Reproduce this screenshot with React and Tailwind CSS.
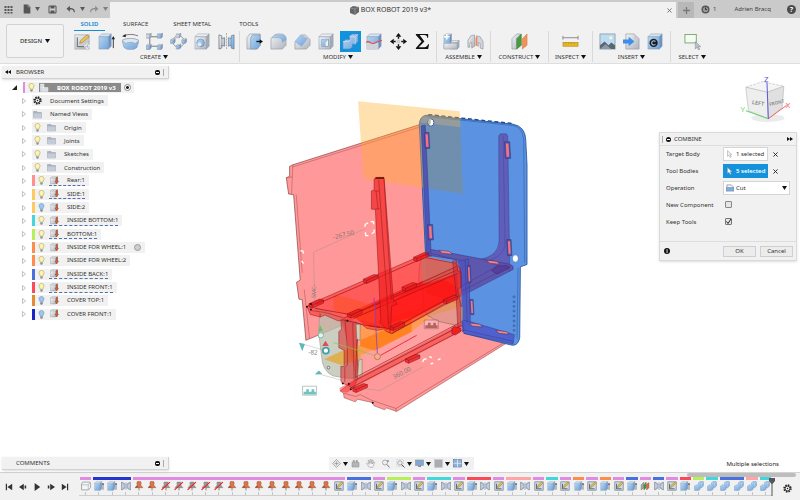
import React from "react";

const PINK = "#e28be2";
const BLUE = "#4a70e0";
const NAVY = "#2536cf";
const LIME = "#b8ee5a";
const CYAN = "#45d6dc";
const RED = "#fa4a58";
const SALMON = "#ffa5a5";
const ORANGE = "#ff8c4c";

function Caret({ className = "" }) {
  return (
    <svg viewBox="0 0 5 4" className={`h-1 w-[5px] shrink-0 ${className}`} aria-hidden="true">
      <path d="M0 0h5L2.500 4z" fill="#111" />
    </svg>
  );
}

/* Shared paint servers for every icon on the page */
function Paints() {
  return (
    <svg className="absolute h-0 w-0" aria-hidden="true">
      <defs>
        <linearGradient id="gb" x1="0" y1="0" x2="1" y2="1">
          <stop offset="0" stopColor="#b9d7f3" />
          <stop offset="1" stopColor="#6fa3db" />
        </linearGradient>
        <linearGradient id="gg" x1="0" y1="0" x2="1" y2="1">
          <stop offset="0" stopColor="#f2f3f5" />
          <stop offset="1" stopColor="#aeb4be" />
        </linearGradient>
      </defs>
    </svg>
  );
}

function Box({ x = 1, y = 1, w = 12, h = 12, d = 3, front = "url(#gb)", top = "#d5e4f4", side = "#6793c9", line = "#8495aa" }) {
  return (
    <g stroke={line} strokeWidth=".5" strokeLinejoin="round">
      <path d={`M${x} ${y + d}l${d} ${-d}h${w}l${-d} ${d}z`} fill={top} />
      <path d={`M${x + w} ${y + d}l${d} ${-d}v${h}l${-d} ${d}z`} fill={side} />
      <path d={`M${x} ${y + d}h${w}v${h}h${-w}z`} fill={front} />
    </g>
  );
}

const grey = { front: "url(#gg)", top: "#eceef1", side: "#a5abb5" };

const ART = {
  sketch: (
    <>
      <rect x="1" y="2" width="15" height="15" fill="url(#gg)" stroke="#9aa0a8" strokeWidth=".7" />
      <path d="M3.500 4.500v10h9" fill="none" stroke="#555d66" strokeWidth="1" />
      <path d="M6 11l1-3 7-6 2 2-7 6z" fill="#f4c64e" stroke="#917131" strokeWidth=".6" />
      <path d="M14 11v6M11 14h6" stroke="#fff" strokeWidth="2.400" />
      <path d="M14 11.500v5M11.500 14h5" stroke="#9aa4b5" strokeWidth=".8" />
    </>
  ),
  extrude: (
    <>
      <Box x={1} y={1} w={10} h={13} />
      <path d="M16.200 5v11" stroke="#333" strokeWidth="1" />
      <path d="M14.400 6.500L16.200 3.300 18 6.500z" fill="#222" />
    </>
  ),
  revolve: (
    <>
      <path d="M0 8c5-3 13-3 18 0l-2 7c-2 2-4 2.500-7 2.500S4 17 2 15z" fill="url(#gb)" stroke="#8aa0b8" strokeWidth=".6" />
      <path d="M0 8c5-3 13-3 18 0l-4 3c-3-1.500-7-1.500-10 0z" fill="#dfe5ec" stroke="#8aa0b8" strokeWidth=".6" />
      <path d="M2 3c4-2 10-2 15 0" fill="none" stroke="#555" strokeWidth=".8" />
      <path d="M4 1L0 3.500l4 1z" fill="#222" />
    </>
  ),
  pattern: (
    <>
      <path d="M4 4h10M4 4v10h10" stroke="#555" strokeWidth=".8" fill="none" />
      <Box x={0} y={0} w={4} h={4} d={1.5} {...grey} />
      <Box x={12} y={0} w={4} h={4} d={1.5} />
      <Box x={0} y={12} w={4} h={4} d={1.5} />
      <Box x={12} y={12} w={4} h={4} d={1.5} />
    </>
  ),
  circular: (
    <>
      <circle cx="9" cy="9" r="6" fill="none" stroke="#777" strokeWidth=".7" />
      <Box x={6.5} y={0} w={3.5} h={3.5} d={1.500} {...grey} />
      <Box x={0.500} y={6} w={3.5} h={3.5} d={1.500} />
      <Box x={12.500} y={6} w={3.5} h={3.5} d={1.500} />
      <Box x={6.500} y={12} w={3.5} h={3.5} d={1.500} />
    </>
  ),
  hole: (
    <>
      <Box x={1} y={1} w={12} h={13} {...grey} />
      <circle cx="7" cy="10.500" r="4" fill="url(#gb)" stroke="#7b8ba0" strokeWidth=".7" />
      <circle cx="5.800" cy="12" r="2.200" fill="#dfeaf5" />
    </>
  ),
  mirror: (
    <>
      <path d="M1 2l3 1v3l3-1v9l-3-1v3l-3 1z" fill="url(#gg)" stroke="#6f7680" strokeWidth=".8" />
      <path d="M17 2l-3 1v3l-3-1v9l3-1v3l3 1z" fill="url(#gb)" stroke="#6f8199" strokeWidth=".8" />
      <path d="M4 5v9M14 5v9" stroke="#7f8893" strokeWidth=".6" />
      <path d="M9 0v18" stroke="#777" strokeWidth=".6" strokeDasharray="2 1" />
    </>
  ),
  presspull: (
    <>
      <path d="M1 5l3-4h11v12l-4 4H1z" fill="url(#gg)" stroke="#8a919b" strokeWidth=".6" />
      <path d="M5 5l2-3h8v11l-3 4H5z" fill="url(#gb)" stroke="#7792b0" strokeWidth=".6" />
      <path d="M11 9h4" stroke="#111" strokeWidth="1.400" />
      <path d="M14.500 6.500L18 9l-3.500 2.500z" fill="#111" />
    </>
  ),
  fillet: (
    <>
      <path d="M1 6l4-4c2-1 4-1 6-1 4 0 6 2 6 5v7l-4 4H1z" fill="url(#gg)" stroke="#8a919b" strokeWidth=".6" />
      <path d="M5 2h6c4 0 6 2 6 5l-4 3c0-4-2-5-5-5H2z" fill="url(#gb)" stroke="#86a3c2" strokeWidth=".5" />
    </>
  ),
  chamfer: (
    <>
      <path d="M1 10l7-8h4l5 5v6l-4 4H1z" fill="url(#gg)" stroke="#8a919b" strokeWidth=".6" />
      <path d="M1 9l6-7 7 4-6 8z" fill="url(#gb)" stroke="#86a3c2" strokeWidth=".5" />
    </>
  ),
  shell: (
    <>
      <Box x={1} y={1} w={12} h={13} {...grey} />
      <rect x="4" y="7" width="7" height="7" fill="#e9f1f9" stroke="#76808d" strokeWidth=".6" />
      <path d="M4 7h7l-3 3v4H4z" fill="url(#gb)" />
    </>
  ),
  combine: (
    <g stroke="#587fae" strokeWidth=".6" strokeLinejoin="round">
      <path d="M1 9l3-2h4V3l3-2h6v8l-3 3h-3v3l-3 2H1z" fill="url(#gb)" />
      <path d="M1 9h6l2-2M8 4h6l3-3M14 4v8" fill="none" stroke="#dceafa" />
    </g>
  ),
  split: (
    <>
      <Box x={1} y={1} w={12} h={13} />
      <path d="M1 10h12v7H1z" fill="#cfd4db" />
      <path d="M0 10c3-3 5 2 8 1s6-3 9-3" fill="none" stroke="#e34848" strokeWidth="1.200" />
    </>
  ),
  move: (
    <g fill="#111">
      <path d="M9 0l3 4H6zM9 18l3-4H6zM0 9l4-3v6zM18 9l-4-3v6z" />
      <path d="M9 4v2M9 12v2M4 9h2M12 9h2" stroke="#111" strokeWidth="1.500" />
      <path d="M7 7h4v4H7z" fill="#ccd0d5" />
    </g>
  ),
  sigma: <path d="M2 1h13v4h-1c0-2-1-3-3-3H6l5 7-6 6h6c2 0 3-1 4-3h1l-1 5H2v-1l6-7-6-7z" fill="#111" />,
  component: (
    <>
      <Box x={1} y={1} w={6} h={13} d={2} />
      <Box x={8} y={8} w={7} h={7} d={2} {...grey} />
      <path d="M1 11h14v6H1z" fill="url(#gg)" stroke="#8a919b" strokeWidth=".5" />
      <path d="M4 1v6M1 4h6" stroke="#fff" strokeWidth="1.600" />
    </>
  ),
  joint: (
    <>
      <path d="M1 15V8l3-5 4-1v12l-3 2v-6l-2 1v4z" fill="url(#gg)" stroke="#8d949e" strokeWidth=".7" />
      <path d="M10 3l4 1 3 5v8l-3-1v-5l-2-1v4l-2-1z" fill="#d3d6dc" stroke="#8d949e" strokeWidth=".7" />
      <path d="M9 5l2-1v9l-2 1z" fill="#f08a58" />
    </>
  ),
  plane: (
    <>
      <path d="M1 6l5-5h4v12l-4 4H1z" fill="url(#gg)" stroke="#8a919b" strokeWidth=".6" />
      <path d="M6 6l5-5v12l-5 4z" fill="#4b9a3e" stroke="#38762f" strokeWidth=".5" />
      <path d="M12 6l5-5v12l-5 4z" fill="#f29257" stroke="#c8713d" strokeWidth=".5" />
    </>
  ),
  measure: (
    <>
      <path d="M1 5h16M1 3v4M17 3v4" stroke="#888" strokeWidth="1" />
      <rect x="1" y="10" width="16" height="4" fill="#e8b51c" stroke="#a6821b" strokeWidth=".6" />
      <path d="M4 10v1.500M7 10v1.500M10 10v1.500M13 10v1.500" stroke="#a6821b" strokeWidth=".6" />
    </>
  ),
  image: (
    <>
      <rect x="1" y="1" width="16" height="16" fill="#bcdcf1" stroke="#8796a6" strokeWidth=".8" />
      <circle cx="12.500" cy="5" r="1.600" fill="#fff8d8" />
      <path d="M1 13l5-4 4 4 3-3 4 3v4H1z" fill="#5c6672" />
      <path d="M1 17l6-5 6 5z" fill="#8d98a5" />
    </>
  ),
  insert: (
    <>
      <path d="M3 1h9l5 5v11H3z" fill="url(#gg)" stroke="#959ba4" strokeWidth=".7" />
      <path d="M12 1v5h5z" fill="#c5cad1" />
      <path d="M0 7h6V4l6 5-6 5v-3H0z" fill="#3d8eea" />
    </>
  ),
  store: (
    <>
      <Box x={1} y={1} w={12} h={13} />
      <circle cx="7" cy="10.500" r="4.400" fill="#1b1f24" />
      <path d="M9 9c-2-1.500-4-.5-4 1.500s2 3 4 1.500" fill="none" stroke="#a9cbee" strokeWidth="1.200" />
    </>
  ),
  select: (
    <>
      <rect x="1" y="1.500" width="12" height="9" fill="#f6faf4" stroke="#6aa35c" strokeWidth=".9" />
      <path d="M12 9v8l2-2 1.500 3 1.200-.7-1.500-2.800h2.600z" fill="#b9c0c8" stroke="#7e858d" strokeWidth=".5" />
    </>
  ),
  part: (
    <>
      <path d="M1 6c1-3 2-4 4-4h10c2 0 2 1 2 3v7l-4 4H1z" fill="#f4f5f7" stroke="#6b7078" strokeWidth="1" />
      <path d="M1 7h12v9M13 7l3-4" fill="none" stroke="#8a9099" strokeWidth=".9" />
    </>
  ),
  series: (
    <g fill="#c3cfde" stroke="#6c7785" strokeWidth="1">
      <path d="M1 2l3 1v2h3v8H4v2l-3 1z" />
      <path d="M17 2l-3 1v2h-3v8h3v2l3 1z" />
      <path d="M9 2v14" stroke="#5b86bd" />
    </g>
  ),
  pin: (
    <>
      <path d="M9 11v6" stroke="#555" strokeWidth="1.200" />
      <path d="M6 1h6l1 3-1 3 4 5H2l4-5-1-3z" fill="#dd7348" stroke="#94492c" strokeWidth=".8" />
      <path d="M2 12h6l-2-4z" fill="#93573f" />
    </>
  ),
  pinoff: (
    <>
      <path d="M9 11v6" stroke="#555" strokeWidth="1.200" />
      <path d="M6 2h6l1 2-1 3 4 5H2l4-5-1-3z" fill="#9b9b9b" stroke="#666" strokeWidth=".8" />
      <path d="M1 16L16 2" stroke="#f02020" strokeWidth="2.200" />
    </>
  ),
  tsketch: (
    <>
      <rect x="1.500" y="1.500" width="15" height="15" fill="#cbdcec" stroke="#6a7786" strokeWidth="1.200" />
      <path d="M4.500 5v9h9" fill="none" stroke="#38424d" strokeWidth="1.300" />
      <path d="M6 12l1-4 7-6 2 2-7 7z" fill="#f3b93b" stroke="#7a5a17" strokeWidth=".7" />
    </>
  ),
  planes: (
    <>
      <path d="M2 7l5-5v10l-5 4z" fill="#a6a9ae" stroke="#62656a" strokeWidth=".8" />
      <path d="M7 7l4-5v10l-4 4z" fill="#4b9a3e" stroke="#38762f" strokeWidth=".8" />
      <path d="M12 6l4-3v9l-4 4z" fill="#e66a48" stroke="#8e3b24" strokeWidth=".8" />
    </>
  ),
  bulb: (
    <>
      <path d="M9 1c-4 0-5.500 3-5 5.500.5 2.500 2.500 3.500 2.500 6h5c0-2.500 2-3.500 2.500-6C14.500 4 13 1 9 1z" fill="#fff3b0" stroke="#9c8c50" strokeWidth="1" />
      <path d="M6.500 13h5v3l-1.500 1.500H8L6.500 16z" fill="#8f949b" />
    </>
  ),
  bulboff: (
    <>
      <path d="M9 1c-4 0-5.500 3-5 5.500.5 2.500 2.500 3.500 2.500 6h5c0-2.500 2-3.500 2.500-6C14.500 4 13 1 9 1z" fill="#9cc6ee" stroke="#6688ad" strokeWidth="1" />
      <path d="M6.500 13h5v3l-1.500 1.500H8L6.500 16z" fill="#7f868f" />
    </>
  ),
  folder: (
    <>
      <path d="M1 3h7l1 2h8v11H1z" fill="#a9b3c0" stroke="#828c9a" strokeWidth=".8" />
      <path d="M1 7h16v9H1z" fill="#c3ccd8" />
    </>
  ),
  body: (
    <>
      <Box x={1} y={1} w={11} h={12} {...grey} line="#70757d" />
      <path d="M12 3h3v7h2l-3.500 6L10 10h2z" fill="#d4623a" stroke="#7b3c26" strokeWidth=".8" />
    </>
  ),
  gear: (
    <>
      <circle cx="9" cy="9" r="6.800" fill="none" stroke="#222" strokeWidth="3.200" strokeDasharray="3 2.340" />
      <circle cx="9" cy="9" r="5" fill="#f1f1f1" stroke="#222" strokeWidth="2" />
      <circle cx="9" cy="9" r="1.500" fill="#222" />
    </>
  ),
  rootpart: (
    <g fill="#dadde2" stroke="#f7f8f9" strokeWidth=".9">
      <path d="M1 2h7v7h8v8H1z" />
      <path d="M1 9h7v8" fill="none" />
    </g>
  ),
  grid: <path d="M1 2h4v4H1zM7 2h4v4H7zM13 2h4v4h-4zM1 8h4v4H1zM7 8h4v4H7zM13 8h4v4h-4zM1 14h4v3H1zM7 14h4v3H7zM13 14h4v3h-4z" fill="#565656" />,
  file: (
    <>
      <path d="M3 1h8l4 4v12H3z" fill="#565656" />
      <path d="M11 1v4h4" fill="none" stroke="#ccc" strokeWidth="1" />
    </>
  ),
  save: (
    <>
      <path d="M2 2h14v14H2z" fill="#d0d0d0" stroke="#555" strokeWidth="2" />
      <path d="M5 2h8v5H5zM5 11h8v5H5z" fill="#555" />
    </>
  ),
  undo: <path d="M7 3v4c6 0 9 2 9 8h-2c0-4-2-5-7-5v4L1 8.500z" fill="#565656" />,
  redo: <path d="M11 3v4c-6 0-9 2-9 8h2c0-4 2-5 7-5v4l6-5.500z" fill="#8f8f8f" />,
  orbit: (
    <g fill="none" stroke="#888" strokeWidth="1.200">
      <path d="M9 1l8 8-8 8-8-8z" fill="#e4e5e7" />
      <path d="M9 5v8M5 9h8" />
    </g>
  ),
  look: <path d="M2 7h14v9H2zM4 3h3v3H4zM10 3h3v3h-3z" fill="#b3b5b8" stroke="#888" strokeWidth="1" />,
  hand: <path d="M6 16L1 9l2-1 3 3-2-8h2l2 6V1h2l.5 8L12 2h2l-1 8 2-4h2l-2 7-2 4z" fill="#f5f5f5" stroke="#888" strokeWidth="1" />,
  zoom: (
    <>
      <circle cx="8" cy="7" r="5" fill="#e9f1f8" stroke="#888" strokeWidth="1.300" />
      <path d="M12 11l5 6" stroke="#777" strokeWidth="2" />
      <path d="M14 2v4M12 4h4" stroke="#555" strokeWidth="1" />
    </>
  ),
  fit: (
    <>
      <rect x="1" y="1" width="14" height="14" fill="none" stroke="#bbb" strokeDasharray="3 2" />
      <circle cx="8" cy="8" r="4.500" fill="#e9f1f8" stroke="#888" strokeWidth="1.300" />
      <path d="M11 11l6 6" stroke="#555" strokeWidth="2" />
    </>
  ),
  display: (
    <>
      <rect x="1" y="2" width="16" height="11" fill="#80a8d4" stroke="#8d949c" strokeWidth="1.200" />
      <path d="M7 13h5v3H6z" fill="#888" />
    </>
  ),
  ground: <rect x="1" y="1" width="16" height="16" fill="#a9acb1" stroke="#c6c8cb" />,
  views: (
    <>
      <rect x="1" y="1" width="16" height="15" fill="#8db1d8" stroke="#58789c" strokeWidth="1.200" />
      <path d="M9 1v15M1 8.500h16" stroke="#e5eef7" strokeWidth="1.600" />
    </>
  ),
};

function Icon({ name, className = "size-[18px]" }) {
  return (
    <svg viewBox="0 0 18 18" className={`shrink-0 ${className}`} aria-hidden="true">
      {ART[name]}
    </svg>
  );
}

function TitleBar() {
  return (
    <header className="flex h-[18px] items-stretch bg-[#cacaca] text-[#444]">
      <div className="flex w-[110px] items-center pl-1">
        <button aria-label="Apps"><Icon name="grid" className="size-[9px]" /></button>
        <button aria-label="File" className="ml-[9px] flex items-center gap-[3px]">
          <Icon name="file" className="size-[10px]" />
          <Caret className="opacity-60" />
        </button>
        <button aria-label="Save" className="ml-2"><Icon name="save" className="size-[9px]" /></button>
        <button aria-label="Undo" className="ml-[9px] flex items-center gap-1">
          <Icon name="undo" className="size-[10px]" />
          <Caret className="opacity-60" />
        </button>
        <button aria-label="Redo" className="ml-1 flex items-center gap-1">
          <Icon name="redo" className="size-[10px]" />
          <Caret className="opacity-40" />
        </button>
      </div>
      <div className="mt-[2px] flex flex-1 items-center bg-[#f1f1f1] pr-[3px]">
        <div className="flex flex-1 items-center justify-center gap-[2px] pl-[5px] text-[7px] leading-4 text-[#333]">
          <svg viewBox="0 0 9 9" className="size-[9px]" aria-hidden="true">
            <path d="M0 2l3-2 6 1v5L5 9 0 7z" fill="#666" />
            <path d="M0 2l5 1 4-2M5 3v6" fill="none" stroke="#a5a5a5" strokeWidth=".6" />
          </svg>
          BOX ROBOT 2019 v3*
        </div>
        <button aria-label="Close tab" className="p-[1px]">
          <svg viewBox="0 0 6 6" className="size-[5px]"><path d="M.5.5l5 5M5.500.5l-5 5" stroke="#555" strokeWidth=".9" /></svg>
        </button>
      </div>
      <button aria-label="New tab" className="ml-[2px] mt-[2px] flex w-4 items-center justify-center bg-[#b8b8b8]">
        <svg viewBox="0 0 8 8" className="size-[7px]"><path d="M4 0v8M0 4h8" stroke="#777" strokeWidth="1.500" /></svg>
      </button>
      <div className="flex w-[106px] items-center pl-[7px] pr-1 text-[6px]">
        <svg viewBox="0 0 9 9" className="size-[9px]" aria-hidden="true">
          <circle cx="4.500" cy="4.500" r="4" fill="#555" />
          <circle cx="4.500" cy="4.500" r="2.600" fill="#999" />
          <path d="M4.500 2.500v2H6" fill="none" stroke="#333" />
        </svg>
        <span className="ml-[3px]">1</span>
        <span className="ml-[18px] flex-1 whitespace-nowrap">Adrien Bracq</span>
        <button aria-label="Help" className="flex size-[9px] items-center justify-center rounded-full bg-[#4a4a4a] text-[7px] font-bold leading-none text-white">?</button>
      </div>
    </header>
  );
}

const GROUPS = [
  { label: "CREATE", width: "w-[171px]", icons: ["sketch", "extrude", "revolve", "pattern", "circular", "hole", "mirror"] },
  { label: "MODIFY", width: "w-[197px]", icons: ["presspull", "fillet", "chamfer", "shell", "combine", "split", "move", "sigma"] },
  { label: "ASSEMBLE", width: "w-[54px]", icons: ["component", "joint"] },
  { label: "CONSTRUCT", width: "w-[58px]", icons: ["plane"] },
  { label: "INSPECT", width: "w-11", icons: ["measure"] },
  { label: "INSERT", width: "w-[78px]", icons: ["image", "insert", "store"] },
  { label: "SELECT", width: "w-[42px]", icons: ["select"] },
];

function Ribbon() {
  return (
    <div className="flex h-[46px] border-b border-[#dedede] bg-[#f1f1f1] text-[6px] text-[#333]">
      <button className="mb-[5px] ml-[6px] mt-[6px] flex w-[58px] items-center justify-center gap-[3px] rounded-[2px] border border-[#d2d2d2] bg-[#f3f3f3] font-medium">
        DESIGN <Caret />
      </button>
      <div className="ml-[5px] flex flex-1 flex-col">
        <nav className="flex h-[13px] items-stretch">
          <button className="ml-[5px] w-[31px] border-b border-[#0d8fd8] font-semibold text-[#0d86cf]">SOLID</button>
          <button className="ml-[18px]">SURFACE</button>
          <button className="ml-[25px]">SHEET METAL</button>
          <button className="ml-7">TOOLS</button>
        </nav>
        <div className="flex flex-1">
          {GROUPS.map((g) => (
            <section key={g.label} className={`flex shrink-0 flex-col ${g.width}`}>
              <div className={`flex h-[21px] justify-center ${g.label === "SELECT" ? "" : "border-r border-[#d9d9d9]"}`}>
                {g.icons.map((n) => (
                  <span key={n} className="flex w-6 justify-center">
                    <button aria-label={n} className={`flex h-[21px] w-[21px] items-center justify-center ${n === "combine" ? "bg-[#0f93dc]" : ""}`}>
                      <Icon name={n} className="size-[17px]" />
                    </button>
                  </span>
                ))}
              </div>
              <button className={`flex h-[10px] items-center justify-center gap-[2px] ${g.label === "SELECT" ? "" : "border-r border-[#d9d9d9]"}`}>
                {g.label} <Caret />
              </button>
            </section>
          ))}
        </div>
      </div>
    </div>
  );
}

const TREE = [
  { t: "Document Settings", kind: "gear" },
  { t: "Named Views", kind: "views" },
  { t: "Origin", kind: "folder" },
  { t: "Joints", kind: "folder" },
  { t: "Sketches", kind: "folder" },
  { t: "Construction", kind: "folder" },
  { t: "Rear:1", c: "#ff9090", on: true, u: true },
  { t: "SIDE:1", c: "#ffc862", on: true, u: true },
  { t: "SIDE:2", c: "#ffc862" },
  { t: "INSIDE BOTTOM:1", c: CYAN, on: true, u: true },
  { t: "BOTTOM:1", c: LIME, on: true, u: true },
  { t: "INSIDE FOR WHEEL:1", c: ORANGE, on: true, dot: true },
  { t: "INSIDE FOR WHEEL:2", c: ORANGE, on: true },
  { t: "INSIDE BACK:1", c: BLUE, on: true, u: true },
  { t: "INSIDE FRONT:1", c: RED, on: true, u: true },
  { t: "COVER TOP:1", c: "#e58a30" },
  { t: "COVER FRONT:1", c: "#1a24c4" },
];

function TreeChip({ item }) {
  if (item.c) {
    return (
      <div className="flex h-[11px] items-center bg-[#f1f1f1] pr-1">
        <i className="h-[11px] w-[3px]" style={{ background: item.c }} />
        <Icon name={item.on ? "bulb" : "bulboff"} className="ml-[2px] size-[9px]" />
        <span className={`ml-[3px] flex h-[10px] items-center gap-2 border-b ${item.u ? "border-dashed border-[#4f70ad]" : "border-transparent"}`}>
          <Icon name="body" className="ml-[1px] size-[9px]" />
          {item.t}
        </span>
        {item.dot && <i className="ml-2 size-[7px] rounded-full border border-[#999] bg-[#ccd0d6]" />}
      </div>
    );
  }
  return (
    <div className="flex h-[11px] items-center bg-[#f1f1f1] pl-[1px] pr-1">
      {item.kind === "folder" && <Icon name="bulb" className="mr-[5px] size-[9px]" />}
      <Icon name={item.kind === "gear" ? "gear" : "folder"} className="mr-2 size-[9px]" />
      {item.t}
    </div>
  );
}

function PanelBar({ title, arrow }) {
  return (
    <div className="flex h-[13px] w-[167px] items-center border-b border-r border-[#d2d2d2] bg-[#f1f1f1] px-[3px] text-[6px] text-[#333] shadow-sm">
      <svg viewBox="0 0 6 4" className="h-1 w-[6px]" aria-hidden="true">
        {arrow && <path d="M3 0L0 2l3 2zM6 0L3 2l3 2z" fill="#111" />}
      </svg>
      <span className="ml-[5px] flex-1">{title}</span>
      <button aria-label={`${title} options`} className="mr-[3px] flex size-[5px] items-center justify-center rounded-[2px] bg-[#111]">
        <i className="h-[1px] w-[3px] bg-white" />
      </button>
      <i className="h-[7px] w-[2px] border-l border-[#aaa]" />
    </div>
  );
}

function Browser() {
  return (
    <aside className="flex flex-col pl-[2px] pt-[2px] text-[6px] leading-none text-[#333]">
      <PanelBar title="BROWSER" arrow />
      <ul className="mt-[2px] grid h-[240px] auto-rows-fr">
        <li className="flex items-center pl-[10px]">
          <button aria-label="Collapse">
            <svg viewBox="0 0 5 5" className="size-[5px]"><path d="M5 0v5H0z" fill="#222" /></svg>
          </button>
          <div className="ml-[6px] flex h-[11px] items-center bg-[#f1f1f1]">
            <i className="h-[11px] w-[2px] bg-[#e28be2]" />
            <Icon name="bulb" className="ml-[2px] size-[9px]" />
            <span className="ml-[3px] flex h-[9px] items-center bg-[#8b8b8b] pl-[1px] pr-[5px] font-bold text-white">
              <Icon name="rootpart" className="mr-2 size-[9px]" />
              BOX ROBOT 2019 v3
            </span>
            <input type="radio" name="active" defaultChecked aria-label="Activate component" className="mx-[3px] size-[7px] appearance-none rounded-full border border-[#888] bg-[radial-gradient(#222_35%,#fff_45%)]" />
          </div>
        </li>
        {TREE.map((item) => (
          <li key={item.t} className="flex items-center whitespace-nowrap pl-[20px]">
            <button aria-label={`Expand ${item.t}`} className="mr-[6px]">
              <svg viewBox="0 0 4 6" className="h-[6px] w-1"><path d="M.5.500L3.500 3l-3 2.500z" fill="#fff" stroke="#999" strokeWidth=".6" /></svg>
            </button>
            <TreeChip item={item} />
          </li>
        ))}
      </ul>
    </aside>
  );
}

function ViewCube() {
  return (
    <svg viewBox="262 18 165 145" className="mr-[7px] h-[48px] w-[55px]" role="img" aria-label="View cube">
      <ellipse cx="352" cy="148" rx="50" ry="12" fill="#ddd" opacity=".6" />
      <path d="M285 55l50-17 65 14-50 18z" fill="#f4f4f4" stroke="#bbb" strokeWidth="2" strokeDasharray="8 4" />
      <path d="M285 55l65 15 3 80-60-24z" fill="#eeeeee" stroke="#bbb" strokeWidth="2" />
      <path d="M350 70l50-18-5 64-42 34z" fill="#e0e0e0" stroke="#bbb" strokeWidth="2" />
      <path d="M353 150l-68-24" stroke="#5fd56a" strokeWidth="3" />
      <path d="M353 150l55-40" stroke="#e66" strokeWidth="3" />
      <path d="M353 150l-4-110" stroke="#5a5ae0" strokeWidth="3" />
      <g fontFamily="Noto Sans, sans-serif">
        <text x="303" y="106" fontSize="17" fontWeight="600" fill="#888" transform="rotate(9 303 106)">LEFT</text>
        <text x="357" y="112" fontSize="14" fontWeight="600" fill="#888" transform="rotate(-14 357 112)">FRONT</text>
        <text x="340" y="39" fontSize="24" fill="#5a5ae0">Z</text>
        <text x="269" y="130" fontSize="24" fill="#6fdc78">Y</text>
        <text x="405" y="118" fontSize="24" fill="#ee5b5b">X</text>
      </g>
    </svg>
  );
}

function Cursor({ fill }) {
  return (
    <svg viewBox="0 0 6 8" className="h-2 w-[6px]" aria-hidden="true">
      <path d="M.5.500v6l1.500-1.300L3.200 7.500l1-.5-1.100-2.200H5z" fill={fill} stroke="#888" strokeWidth=".4" />
    </svg>
  );
}

function Row({ label, id, children }) {
  return (
    <div className="flex items-center">
      <label htmlFor={id} className="w-[57px]">{label}</label>
      {children}
    </div>
  );
}

function Clear({ label }) {
  return (
    <button aria-label={label} className="ml-[5px]">
      <svg viewBox="0 0 6 6" className="size-[5px]"><path d="M.5.500l5 5M5.500.500l-5 5" stroke="#222" strokeWidth="1.100" /></svg>
    </button>
  );
}

function CombineDialog() {
  return (
    <form className="mr-[3px] mt-[9px] w-[138px] border border-[#dadada] bg-[#f1f1f1] text-[6px] leading-none text-[#333] shadow-sm" onSubmit={(e) => e.preventDefault()}>
      <header className="flex h-[13px] items-center border-b border-[#ddd] px-[2px]">
        <i className="h-[7px] w-1 border-l border-[#aaa]" />
        <i className="flex size-[5px] items-center justify-center rounded-full bg-[#111]"><i className="h-[1px] w-[3px] bg-white" /></i>
        <span className="ml-[3px] flex-1">COMBINE</span>
        <svg viewBox="0 0 6 4" className="mr-[1px] h-1 w-[6px]" aria-hidden="true"><path d="M0 0l3 2-3 2zM3 0l3 2-3 2z" fill="#111" /></svg>
      </header>
      <div className="grid h-[84px] auto-rows-fr pl-[6px]">
        <Row label="Target Body" id="target">
          <button id="target" className="flex h-[14px] w-[45px] items-center gap-[3px] border border-[#d5d5d5] bg-white pl-[3px] text-[6px]">
            <Cursor fill="#eee" />1 selected
          </button>
          <Clear label="Clear target" />
        </Row>
        <Row label="Tool Bodies" id="tools">
          <button id="tools" className="flex h-[14px] w-[45px] items-center gap-[3px] bg-[#1592dc] pl-1 font-semibold text-white">
            <Cursor fill="#fff" />5 selected
          </button>
          <Clear label="Clear tools" />
        </Row>
        <Row label="Operation" id="op">
          <div className="grid h-[14px] w-[67px] items-center border border-[#d5d5d5] bg-white">
            <select id="op" className="col-start-1 row-start-1 h-3 w-full appearance-none bg-transparent pl-[12px] text-[6px] outline-none">
              <option>Cut</option>
            </select>
            <span className="pointer-events-none col-start-1 row-start-1 flex items-center justify-between px-[2px]">
              <svg viewBox="0 0 9 9" className="size-[8px]" aria-hidden="true">
                <path d="M1 4V1h5l2 2v2" fill="#f3f5f8" stroke="#7f8a99" strokeWidth=".8" />
                <path d="M0 4h9v4H0z" fill="#87aedb" stroke="#5f7fa8" strokeWidth=".6" />
              </svg>
              <Caret />
            </span>
          </div>
        </Row>
        <Row label="New Component" id="newc">
          <input id="newc" type="checkbox" className="ml-[2px] size-[7px] appearance-none rounded-[1px] border border-[#888] bg-[#e6e6e6]" />
        </Row>
        <Row label="Keep Tools" id="keep">
          <span className="ml-[2px] grid size-[7px]">
            <input id="keep" type="checkbox" defaultChecked className="col-start-1 row-start-1 size-[7px] appearance-none rounded-[1px] border border-[#777] bg-[#e6e6e6]" />
            <svg viewBox="0 0 7 7" className="pointer-events-none col-start-1 row-start-1 size-[7px]" aria-hidden="true">
              <path d="M1.500 3.500L3 5.500 6 1" fill="none" stroke="#222" strokeWidth="1" />
            </svg>
          </span>
        </Row>
      </div>
      <footer className="mt-[11px] flex h-[19px] items-center gap-1 border-t border-[#ddd] px-1">
        <span className="flex size-[6px] items-center justify-center rounded-full bg-[#111] text-[5px] font-bold text-white">i</span>
        <button className="ml-auto h-[11px] w-[33px] border border-[#cfcfcf] bg-[#ececec]">OK</button>
        <button className="-mr-[1px] h-[11px] w-[33px] border border-[#cfcfcf] bg-[#ececec]">Cancel</button>
      </footer>
    </form>
  );
}

/* Small joint slots: x, y, width, height, skew in degrees */
const SLOTS = [
  [433, 128, 14, 48, 3], [443, 405, 15, 46, 3], [674, 156, 16, 50, 3], [681, 450, 13, 48, 3],
  [562, 528, 9, 52, 3], [570, 630, 10, 46, 3],
];
const FLATS = [[477, 482], [620, 512], [568, 701], [648, 723]];

/* Finger joints along the shelf and rails of the lower box */
const TABS = [
  [341, 26], [190, 92], [26, 166], [142, 196], [306, 116], [430, 154], [270, 234], [316, 332], [158, 420],
];

function LowerBox() {
  return (
    <g transform="translate(300 245) scale(.33333)" strokeLinejoin="round">
      {/* left wheel cover */}
      <path d="M42 184L56 192 125 222 170 232 176 402 140 402 98 395Q66 380 64 335L56 270 58 205z" fill="#b9bfae" fillOpacity=".75" stroke="#8b8d84" strokeWidth="1.500" />

      {/* front wall */}
      <path d="M125 228L470 66 482 246 170 405z" fill="#ff3333" fillOpacity=".46" />

      {/* construction surfaces seen through the wall */}
      <path d="M72 345L130 318 182 302V342L125 363z" fill="#e3a637" fillOpacity=".8" />
      <path d="M180 245L475 158 482 188 400 212 335 262 182 334z" fill="#ff9a3c" fillOpacity=".75" />
      <path d="M180 288L335 222V262L224 319 180 306z" fill="#ff7e18" fillOpacity=".85" />

      {/* right wheel cover */}
      <path d="M364 38L466 56 474 88 484 190V246L420 232Q372 215 369 190L368 130 356 110 358 70z" fill="#c98f78" fillOpacity=".45" stroke="#7b5a55" strokeWidth="1.500" />

      {/* shelf, its front strip and the darker overlap */}
      <path d="M20 186L45 172 375 28 384 40 470 58 482 74 484 150 275 268 260 262 250 254 232 258 200 252 186 240 130 226 115 230 74 212 60 218 30 210z" fill="#ff2828" fillOpacity=".55" stroke="#8e1518" strokeWidth="1.500" />
      <path d="M145 206L290 142 470 66 476 150 275 258 190 240z" fill="#ff0808" fillOpacity=".55" />
      <path d="M100 152L145 160 225 184V236L190 232 100 196z" fill="#ff4a10" fillOpacity=".4" />
      <path d="M275 174L366 112Q400 100 440 110 470 122 474 138L420 180 335 218 262 240z" fill="#ff0f0f" fillOpacity=".5" />
      <path d="M364 40L466 58 474 84 400 112 368 118z" fill="#c0766e" fillOpacity=".6" />
      <g fill="none" stroke="#971417" strokeWidth="2">
        <path d="M48 180L372 40M44 192L160 212M130 222L470 66M150 214L474 76M160 222L476 86" />
        <path d="M275 254L474 146M275 268L484 154M205 244L270 252V266M180 240L240 250" />
        <path d="M30 198L72 204 130 220M60 208V218" strokeWidth="1.500" />
      </g>

      {/* left end post */}
      <path d="M122 226L180 238 170 300 174 400 160 432 126 416 122 410V366H132V318L116 310V262L124 254z" fill="#e03030" fillOpacity=".6" stroke="#7d2224" strokeWidth="1.500" />
      <path d="M135 228L142 316V362L134 370V414M158 236L162 410M172 262L166 400" fill="none" stroke="#88191b" strokeWidth="1.500" />
      <path d="M168 240h12v48l-10-4zM176 348l10-4v46l-14 14zM480 184l8 4v40l-6 6z" fill="#d8cdb2" stroke="#6f6a58" strokeWidth="1.500" />

      {/* right end post */}
      <path d="M458 50L470 48 474 80 484 84V128L474 134 484 188V246L474 250 468 140z" fill="#d22632" fillOpacity=".55" stroke="#7d1a2a" strokeWidth="1.500" />

      {/* bottom rail */}
      <path d="M118 432L165 404 460 248 484 240 486 256 468 270 180 420 140 446 120 442z" fill="#f62a2a" fillOpacity=".5" />
      <path d="M165 400L478 236M165 408L480 246M150 432L486 258" fill="none" stroke="#8f2023" strokeWidth="2" />
      <path d="M456 252l8-6 18 6v10l-16 10-10-4z" fill="#f01f24" stroke="#7d1518" strokeWidth="1.500" />

      {TABS.map(([x, y]) => (
        <path key={`${x}-${y}`} d={`M${x} ${y + 12}l32-14 12 3v9l-34 15-10-4zM${x + 10} ${y + 16}l34-15M${x} ${y + 12}l10 4v9`} fill="#f4181c" fillOpacity=".8" stroke="#7d1518" strokeWidth="1.500" />
      ))}
    </g>
  );
}

function Scene() {
  return (
    <svg viewBox="0 64 800 409" className="absolute inset-0 h-full w-full" role="img" aria-label="Box robot model">
      <g transform="translate(280 90) scale(.33333)" strokeLinejoin="round">
        {/* rear wall */}
        <path d="M38 225L420 104 440 118 440 590 200 700 77 753 66 631 56 629 49 578 60 572 40 315 25 313 18 264 28 260 28 230z" fill="#ff3333" fillOpacity=".5" />
        <path d="M185 708L77 753 66 631 56 629 49 578 60 572 40 315 25 313 18 264 28 260 28 230 38 225 420 104" fill="none" stroke="#86393c" strokeWidth="2" />
        <path d="M36 232L418 112M38 225L36 262 28 262M36 262L34 312M48 315L66 550M88 748L72 600M18 264h10" fill="none" stroke="#a34d50" strokeWidth="1.500" />

        {/* bottom plate */}
        <path d="M180 905L208 884 545 708 702 740V748L350 967 318 956 314 962 282 950 276 940 232 930 226 938 192 926 190 912z" fill="#ff3333" fillOpacity=".5" stroke="#8b3c40" strokeWidth="1.500" />
        <path d="M190 912L228 922 240 916 276 934 312 946 348 958 702 742M348 958V967" fill="none" stroke="#9a4447" strokeWidth="1.500" />

        {/* blue panel */}
        <path d="M418 103Q420 78 440 76L700 103Q736 110 738 148L742 226V525L722 532 720 745Q716 768 698 768L552 732 540 640 446 610 437 500z" fill="#5b93e2" />
        <path d="M437 500L418 103Q420 78 440 76L700 103Q736 110 738 148L742 226V525L722 532 720 745Q716 768 698 768L552 732" fill="none" stroke="#23509a" strokeWidth="2.500" />
        <path d="M440 80L700 107Q728 112 732 148L735 520M715 535L712 748" fill="none" stroke="#23509a" strokeWidth="1.500" />
        <path d="M445 74L700 101" stroke="#1f488e" strokeWidth="4" strokeDasharray="12 8" />

        {/* orange plane crosses the rear wall and the blue panel */}
        <path d="M234 34L540 64 549 312 250 266z" fill="#ffac20" fillOpacity=".36" />
        <path d="M421 98L542 112 549 312 432 294z" fill="#4a7fc0" fillOpacity=".5" />

        {/* violet ribs */}
        <path d="M424 108L436 106 454 500 440 500z" fill="#4e4fb4" fillOpacity=".9" stroke="#333d88" strokeWidth="1.500" />
        <path d="M657 138L662 132H680L684 138 690 545 600 510Q656 500 658 455z" fill="#5f59b6" fillOpacity=".9" stroke="#3d408e" strokeWidth="1.500" />
        <path d="M670 138L676 470Q668 505 610 518" fill="none" stroke="#44458f" strokeWidth="1.500" />
        <path d="M437 500L455 480 690 524 700 530V540L545 620 540 512 437 496z" fill="#5f4fa6" fillOpacity=".88" stroke="#3b2f86" strokeWidth="1.500" />
        <path d="M534 515L566 508 572 712 548 728z" fill="#4f55bd" fillOpacity=".85" stroke="#303a94" strokeWidth="1.500" />
        <path d="M548 692L575 698 704 736 700 764 552 732z" fill="#4c5ccc" fillOpacity=".9" stroke="#303a94" strokeWidth="1.500" />
        <path d="M540 608L696 528M545 590L660 526M556 512L562 700M552 722L700 756M440 488L535 512" fill="none" stroke="#44358c" strokeWidth="1.500" />
        <path d="M636 544l14-14 30-2 10 6-38 20z" fill="#54409a" stroke="#35287a" strokeWidth="1.500" />

        {/* inner cover behind the shelf, over the blue panel */}
        <path d="M437 500L535 522 545 610V650L440 610z" fill="#ec8079" />
      </g>

      <LowerBox />

      <g transform="translate(280 90) scale(.33333)" strokeLinejoin="round">
        {/* post */}
        <path d="M282 268L290 263H312L340 632 350 640 350 645 335 650 332 714 320 720 300 700 302 690 286 360 274 358V304L282 300z" fill="#f21c1c" fillOpacity=".66" stroke="#8f1518" strokeWidth="1.500" />
        <path d="M296 270L322 640 326 712M312 268L334 630M283 304H296M286 358H298M288 304L294 358" fill="none" stroke="#8f1518" strokeWidth="1.500" />
        <path d="M286 265h26" stroke="#400b0c" strokeWidth="4" />

        {SLOTS.map(([x, y, w, h, s]) => (
          <g key={`${x}-${y}`} transform={`translate(${x} ${y}) skewX(${s})`}>
            <rect width={w} height={h} fill="#5a50ac" stroke="#2d346f" strokeWidth="1.500" />
            <rect x={w / 4} y="5" width={w / 2} height={h - 10} fill="#f4767d" />
          </g>
        ))}
        {FLATS.map(([x, y]) => (
          <path key={`${x}-${y}`} d={`M${x} ${y}l32 4 8 8-30-3z`} fill="#f58a8a" stroke="#51265c" strokeWidth="1.500" />
        ))}

        {/* bolt holes */}
        <ellipse cx="453" cy="98" rx="9" ry="11" fill="#fff" stroke="#23509a" strokeWidth="2.500" />
        <ellipse cx="449" cy="96" rx="4" ry="9" fill="#c3bfa0" />
        <ellipse cx="707" cy="507" rx="9" ry="11" fill="#fff" stroke="#23509a" strokeWidth="1.500" />
        {[622, 637, 651, 665, 680, 695, 709, 723].map((y) => (
          <circle key={y} cx="703" cy={y} r="3" fill="#5b93e2" stroke="#1e407c" strokeWidth="1.500" />
        ))}
        <circle cx="145" cy="835" r="4" fill="#eee" stroke="#444" strokeWidth="2" />
        <circle cx="137" cy="784" r="9" fill="#fff" stroke="#3f9fa6" strokeWidth="5" />
        <circle cx="122" cy="738" r="8" fill="#e6f2ee" stroke="#7cb9b0" strokeWidth="3" />

        {/* origin axes */}
        <path d="M292 792L282 625" stroke="#8a3fc8" strokeWidth="2.500" />
        <path d="M302 798L410 738" stroke="#f02c3c" strokeWidth="3" />
        <path d="M160 760L282 798" stroke="#8fbf3c" strokeWidth="2" />
        <circle cx="292" cy="802" r="9" fill="#f6b08a" stroke="#a66048" strokeWidth="2" />
        <path d="M126 770l10-16 10 16z" fill="#e24d4d" />
        <path d="M114 726l6-18 8 18z" fill="#58c764" />

        {/* sketch dimensions */}
        <g fill="none" stroke="#7d7d7d" strokeWidth="1.500" opacity=".6">
          <path d="M254 418L100 488 104 660M66 764L130 782M250 898L300 904 430 832M108 852L180 872" />
        </g>
        <g fill="#8a7878" fontFamily="Noto Sans, sans-serif" fontSize="19">
          <text transform="translate(160 450) rotate(-14)">-267.50</text>
          <text transform="translate(342 870) rotate(-27)">360.00</text>
          <text transform="translate(84 794) rotate(6)">-82</text>
          <text transform="translate(106 626) rotate(-88)" fontSize="17">SMC-</text>
        </g>
        <g fill="none" stroke="#fff" strokeWidth="4">
          <path d="M254 412l2-8 8-4M272 396l8 0 1 8M256 428l1 10 8 0M282 420l0 8-7 4" />
          <path d="M428 818l4-8 8-1M448 802l8 3M452 824l8-2M474 812l8-4" />
          <path d="M60 484l8 0 2 8M64 514l6 8" />
        </g>
        <path d="M56 760l18 4-8 22zM104 856l12-12 10 10z" fill="#5fb8b4" />

        {/* joint glyphs */}
        <g fill="#fff" fillOpacity=".2" stroke="#9aa7a7" strokeWidth="2">
          <rect x="67" y="891" width="42" height="27" fillOpacity="1" />
          <rect x="433" y="692" width="42" height="26" stroke="#a5696b" />
        </g>
        <path d="M70 916v-8h8v-8h8v8h8v-8h8v8h5v8z" fill="#6fc3c0" />
        <path d="M436 716v-8h8v-8h8v8h8v-8h8v8h5v8z" fill="#b4645f" />
        <g fill="#1a0a0a">
          <circle cx="80" cy="652" r="3" /><circle cx="92" cy="660" r="3" /><circle cx="92" cy="644" r="3" />
          <circle cx="188" cy="883" r="3" /><circle cx="206" cy="884" r="3" /><circle cx="212" cy="900" r="3" />
          <circle cx="278" cy="941" r="3" /><circle cx="202" cy="694" r="3" />
        </g>
      </g>
    </svg>
  );
}

const NAV = [
  ["orbit", true], ["look"], ["hand"], ["zoom"], ["fit", true], ["display", true], ["ground", true], ["views", true],
];

function NavBar() {
  return (
    <div className="flex h-[13px] items-center bg-[#f1f1f1] px-[1px]">
      {NAV.map(([n, caret]) => (
        <button key={n} aria-label={n} className="flex items-center gap-[2px] pl-[2px] pr-[1px] last:pr-1">
          <Icon name={n} className="size-[9px]" />
          {caret ? <Caret /> : <i className="w-[1px]" />}
        </button>
      ))}
    </div>
  );
}

const rep = (n, t) => Array(n).fill(t);
const EP = ["extrude", "series"];
const SK = [PINK, ["tsketch"]];
const TIMELINE = [
  [PINK, ["part"]],
  [NAVY, ["extrude", "extrude", "series"]],
  [PINK, [...rep(2, "pin"), ...rep(5, "pinoff"), ...rep(8, "pin"), "tsketch"]],
  [BLUE, EP], SK, [LIME, EP], SK, [CYAN, EP], SK, [RED, EP], SK, [SALMON, EP], SK,
  [CYAN, ["extrude"]], SK, [ORANGE, ["extrude"]], SK, [ORANGE, ["extrude"]], SK, [BLUE, ["extrude"]],
  [PINK, ["planes"]], [BLUE, ["series"]], SK, [RED, ["extrude"]],
  [LIME, ["combine"]], [CYAN, ["combine"]], [BLUE, ["combine", "combine"]], [SALMON, ["combine"]], [CYAN, ["combine"]],
];

const PLAYER = [
  ["First", "M1 1h1.500v8H1zM9 1v8L3 5z"],
  ["Back", "M6 1v8L0 5zM7 3h2v4H7z"],
  ["Play", "M2 0l7 5-7 5z"],
  ["Forward", "M4 1v8l6-4zM1 3h2v4H1z"],
  ["Last", "M7.500 1H9v8H7.500zM1 1v8l6-4z"],
];

function Timeline() {
  return (
    <footer className="flex h-[28px] flex-col border-t border-[#d3d3d3] bg-[#f1f1f1]">
      <div className="flex h-[4px] justify-end pr-1">
        <i className="h-[4px] w-[109px] rounded-full bg-[#bdbdbd]" />
      </div>
      <div className="flex flex-1">
        <div className="flex w-[79px] items-center gap-1 pb-1 pl-1">
          {PLAYER.map(([n, d]) => (
            <button key={n} aria-label={n} className="flex w-[10px] justify-center">
              <svg viewBox="0 0 10 10" className="size-[8px]"><path d={d} fill="#333" /></svg>
            </button>
          ))}
        </div>
        <div className="flex h-[19px] min-w-0 flex-1 border-b border-[#cfcfcf]">
          {TIMELINE.map(([color, items], i) => (
            <div key={i} className="flex min-w-0 basis-0 flex-col" style={{ flexGrow: items.length }}>
              <i className="mx-[1px] h-[3px] shrink-0" style={{ background: color }} />
              <div className="flex pt-[1px]">
                {items.map((n, k) => (
                  <button key={k} aria-label={n} className="flex min-w-0 flex-1 flex-col items-center">
                    <Icon name={n} className="size-[10px]" />
                    <i className="mt-[1px] h-[3px] w-[1px] bg-[#c4c4c4]" />
                  </button>
                ))}
              </div>
            </div>
          ))}
        </div>
        <div className="flex w-[28px]">
          <svg viewBox="0 0 6 18" className="-ml-[3px] mt-[1px] h-[18px] w-[6px]" aria-hidden="true">
            <path d="M0 0h6v3L3.500 6v12h-1V6L0 3z" fill="#555" />
          </svg>
          <button aria-label="Timeline settings" className="ml-2 self-center"><Icon name="gear" className="size-[9px]" /></button>
        </div>
      </div>
    </footer>
  );
}

export default function App() {
  return (
    <div className="flex min-h-screen flex-col bg-white font-['Noto_Sans','Open_Sans',sans-serif]">
      <Paints />
      <TitleBar />
      <Ribbon />
      <main className="relative flex flex-1 flex-col">
        <Scene />
        <div className="relative flex flex-1 items-start justify-between">
          <Browser />
          <div className="flex flex-col items-end pt-[11px]">
            <ViewCube />
            <CombineDialog />
          </div>
        </div>
        <div className="relative grid grid-cols-[1fr_auto_1fr] items-center pb-[2px] pl-[2px]">
          <PanelBar title="COMMENTS" />
          <NavBar />
          <p className="pr-[21px] text-right text-[6px] leading-3 text-[#222]">Multiple selections</p>
        </div>
      </main>
      <Timeline />
    </div>
  );
}
